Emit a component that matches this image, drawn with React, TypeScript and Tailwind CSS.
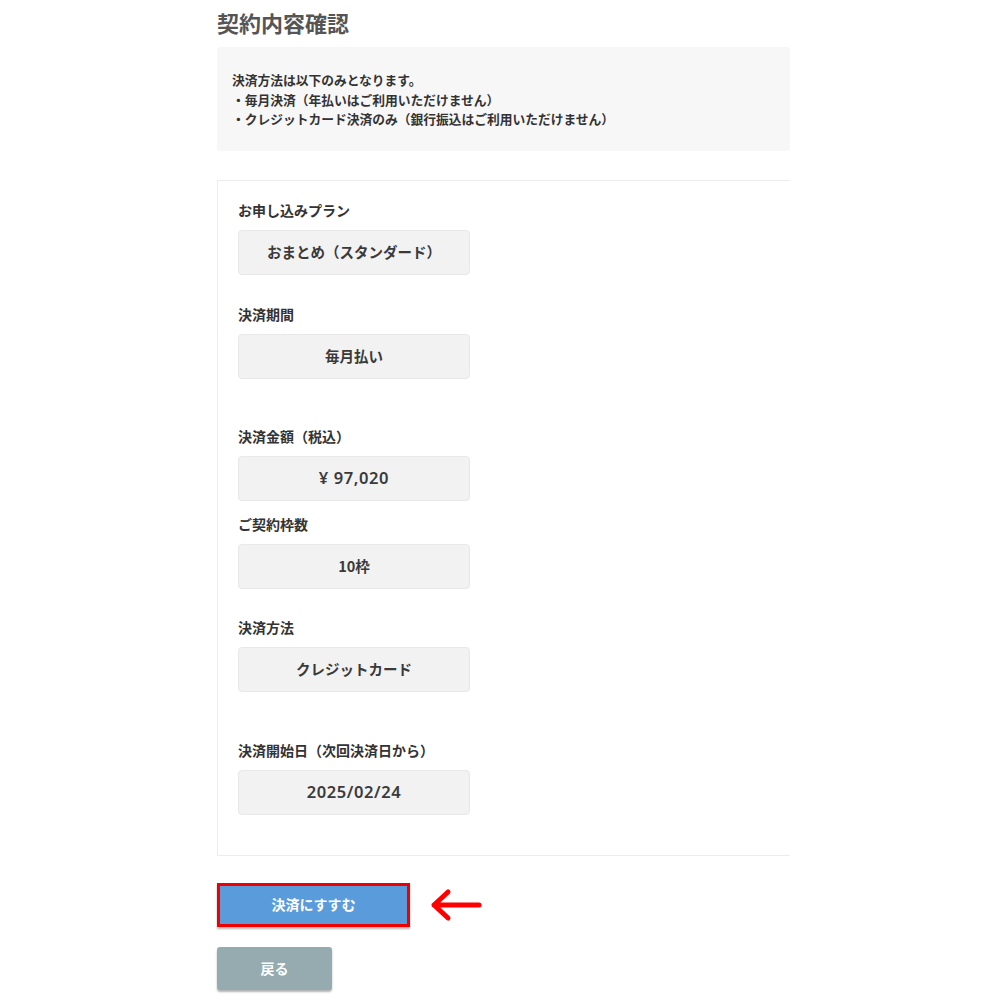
import React from "react";

const fields = [
  { label: "お申し込みプラン", value: "おまとめ（スタンダード）", mt: "mt-0", latin: false },
  { label: "決済期間", value: "毎月払い", mt: "mt-[29px]", latin: false },
  { label: "決済金額（税込）", value: "¥ 97,020", mt: "mt-[47px]", latin: true },
  { label: "ご契約枠数", value: "10枠", mt: "mt-[13px]", latin: false },
  { label: "決済方法", value: "クレジットカード", mt: "mt-[28px]", latin: false },
  { label: "決済開始日（次回決済日から）", value: "2025/02/24", mt: "mt-[48px]", latin: true },
];

const App = () => {
  return (
    <div
      className="min-h-[1000px] w-[1000px] bg-white pl-[217px]"
      style={{ fontFamily: '"Noto Sans CJK JP", "Noto Sans", sans-serif' }}
    >
      <h1 className="pt-[8px] text-[22px] font-bold leading-[28px] text-[#555]">契約内容確認</h1>

      <div className="mt-[11px] w-[573px] rounded-[3px] bg-[#f7f7f7] px-[15px] pt-[23px] pb-[22px] text-[12.75px] font-bold leading-[19.5px] text-[#333]">
        <p>決済方法は以下のみとなります。</p>
        <p>・毎月決済（年払いはご利用いただけません）</p>
        <p>・クレジットカード決済のみ（銀行振込はご利用いただけません）</p>
      </div>

      <div className="mt-[29px] w-[573px] border-y border-l border-[#ededed] px-[20px] pt-[19px] pb-[40px]">
        {fields.map((f) => (
          <div key={f.label} className={f.mt}>
            <p className="text-[14px] font-bold leading-[20px] text-[#333]">{f.label}</p>
            <div className="mt-[10px] flex h-[45px] w-[232px] items-center justify-center rounded-[4px] border border-[#e8e8e8] bg-[#f2f2f2] text-[#3a3a3a]">
              {f.latin ? (
                <span
                  className="text-[16.5px] font-semibold tracking-[0.6px]"
                  style={{ fontFamily: '"Noto Sans", "Noto Sans CJK JP", sans-serif' }}
                >
                  {f.value}
                </span>
              ) : (
                <span className="text-[14.5px] font-bold">{f.value}</span>
              )}
            </div>
          </div>
        ))}
      </div>

      <div className="mt-[27px] flex items-center">
        <button className="flex h-[44px] w-[193px] items-center justify-center border-[3px] border-[#ee0000] bg-[#5a9bdc] text-[14px] font-bold text-white shadow-[0_2px_2px_rgba(0,0,0,0.3)]">
          決済にすすむ
        </button>
        <svg width="56" height="34" viewBox="0 0 56 34" className="ml-[19px]">
          <path
            d="M50 17 H5 M19 4 L5 17 L19 30"
            fill="none"
            stroke="#ff0000"
            strokeWidth="5"
            strokeLinecap="round"
            strokeLinejoin="round"
          />
        </svg>
      </div>

      <button className="mt-[20px] flex h-[43px] w-[115px] items-center justify-center rounded-[3px] bg-[#95abb0] text-[14px] font-bold text-white shadow-[0_2px_2px_rgba(0,0,0,0.3)]">
        戻る
      </button>
    </div>
  );
};

export default App;
